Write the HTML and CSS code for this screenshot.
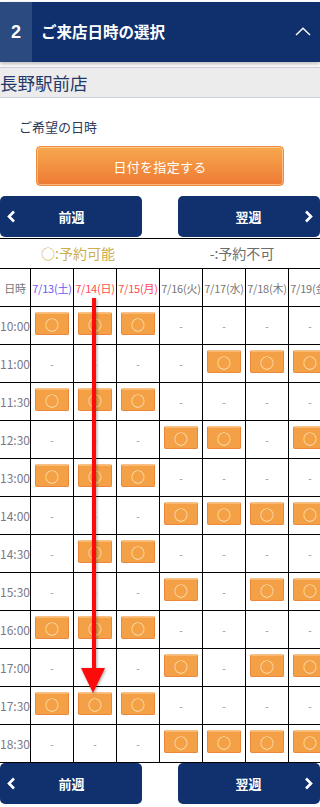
FILE: index.html
```html
<!DOCTYPE html>
<html lang="ja">
<head>
<meta charset="utf-8">
<title>ご来店日時の選択</title>
<link rel="stylesheet" href="styles.css">
</head>
<body>
<div class="page">
  <header class="step-head">
    <span class="step-num">2</span>
    <h2 class="step-title">ご来店日時の選択</h2>
    <svg class="step-toggle" viewBox="0 0 16 9"><polyline points="1,8 8,1.2 15,8" /></svg>
  </header>

  <div class="store">長野駅前店</div>

  <p class="label">ご希望の日時</p>
  <button class="date-btn">日付を指定する</button>

  <nav class="week-nav">
    <a class="week-btn prev" href="#"><svg class="chev" viewBox="0 0 9 13"><polyline points="7,1.5 2,6.5 7,11.5" /></svg><span>前週</span><i></i></a>
    <a class="week-btn next" href="#"><i></i><span>翌週</span><svg class="chev" viewBox="0 0 9 13"><polyline points="2,1.5 7,6.5 2,11.5" /></svg></a>
  </nav>

  <div class="legend">
    <span class="lg-ok">○:予約可能</span>
    <span class="lg-ng">-:予約不可</span>
  </div>

  <div class="cal-wrap">
    <div class="cal">
      <div class="hd">日時</div>
      <div class="hd sat">7/13(土)</div>
      <div class="hd sun">7/14(日)</div>
      <div class="hd sun">7/15(月)</div>
      <div class="hd">7/16(火)</div>
      <div class="hd">7/17(水)</div>
      <div class="hd">7/18(木)</div>
      <div class="hd">7/19(金)</div>

      <div class="tm">10:00</div>
      <div><span class="slot"><b>○</b></span></div><div><span class="slot"><b>○</b></span></div><div><span class="slot"><b>○</b></span></div>
      <div><span class="dash">-</span></div><div><span class="dash">-</span></div><div><span class="dash">-</span></div><div><span class="dash">-</span></div>

      <div class="tm">11:00</div>
      <div><span class="dash">-</span></div><div><span class="dash">-</span></div><div><span class="dash">-</span></div>
      <div><span class="dash">-</span></div><div><span class="slot"><b>○</b></span></div><div><span class="slot"><b>○</b></span></div><div><span class="slot"><b>○</b></span></div>

      <div class="tm">11:30</div>
      <div><span class="slot"><b>○</b></span></div><div><span class="slot"><b>○</b></span></div><div><span class="slot"><b>○</b></span></div>
      <div><span class="dash">-</span></div><div><span class="dash">-</span></div><div><span class="dash">-</span></div><div><span class="dash">-</span></div>

      <div class="tm">12:30</div>
      <div><span class="dash">-</span></div><div><span class="dash">-</span></div><div><span class="dash">-</span></div>
      <div><span class="slot"><b>○</b></span></div><div><span class="slot"><b>○</b></span></div><div><span class="dash">-</span></div><div><span class="slot"><b>○</b></span></div>

      <div class="tm">13:00</div>
      <div><span class="slot"><b>○</b></span></div><div><span class="slot"><b>○</b></span></div><div><span class="slot"><b>○</b></span></div>
      <div><span class="dash">-</span></div><div><span class="dash">-</span></div><div><span class="dash">-</span></div><div><span class="dash">-</span></div>

      <div class="tm">14:00</div>
      <div><span class="dash">-</span></div><div><span class="dash">-</span></div><div><span class="dash">-</span></div>
      <div><span class="slot"><b>○</b></span></div><div><span class="slot"><b>○</b></span></div><div><span class="slot"><b>○</b></span></div><div><span class="slot"><b>○</b></span></div>

      <div class="tm">14:30</div>
      <div><span class="dash">-</span></div><div><span class="slot"><b>○</b></span></div><div><span class="slot"><b>○</b></span></div>
      <div><span class="dash">-</span></div><div><span class="dash">-</span></div><div><span class="dash">-</span></div><div><span class="dash">-</span></div>

      <div class="tm">15:30</div>
      <div><span class="dash">-</span></div><div><span class="dash">-</span></div><div><span class="dash">-</span></div>
      <div><span class="slot"><b>○</b></span></div><div><span class="dash">-</span></div><div><span class="slot"><b>○</b></span></div><div><span class="slot"><b>○</b></span></div>

      <div class="tm">16:00</div>
      <div><span class="slot"><b>○</b></span></div><div><span class="slot"><b>○</b></span></div><div><span class="slot"><b>○</b></span></div>
      <div><span class="dash">-</span></div><div><span class="dash">-</span></div><div><span class="dash">-</span></div><div><span class="dash">-</span></div>

      <div class="tm">17:00</div>
      <div><span class="dash">-</span></div><div><span class="dash">-</span></div><div><span class="dash">-</span></div>
      <div><span class="slot"><b>○</b></span></div><div><span class="dash">-</span></div><div><span class="slot"><b>○</b></span></div><div><span class="slot"><b>○</b></span></div>

      <div class="tm">17:30</div>
      <div><span class="slot"><b>○</b></span></div><div><span class="slot"><b>○</b></span></div><div><span class="slot"><b>○</b></span></div>
      <div><span class="dash">-</span></div><div><span class="dash">-</span></div><div><span class="dash">-</span></div><div><span class="dash">-</span></div>

      <div class="tm">18:30</div>
      <div><span class="dash">-</span></div><div><span class="dash">-</span></div><div><span class="dash">-</span></div>
      <div><span class="slot"><b>○</b></span></div><div><span class="slot"><b>○</b></span></div><div><span class="slot"><b>○</b></span></div><div><span class="slot"><b>○</b></span></div>
    </div>
  </div>

  <nav class="week-nav bottom">
    <a class="week-btn prev" href="#"><svg class="chev" viewBox="0 0 9 13"><polyline points="7,1.5 2,6.5 7,11.5" /></svg><span>前週</span><i></i></a>
    <a class="week-btn next" href="#"><i></i><span>翌週</span><svg class="chev" viewBox="0 0 9 13"><polyline points="2,1.5 7,6.5 2,11.5" /></svg></a>
  </nav>

  <svg class="arrow" viewBox="0 0 36 404" width="36" height="404">
    <line x1="18" y1="4" x2="18" y2="378" />
    <polygon points="5,374 29,374 17,399" />
  </svg>
</div>
</body>
</html>
```

FILE: styles.css
```css
* { box-sizing: border-box; }

body {
  margin: 0;
  background: #fff;
  font-family: "Noto Sans CJK JP", "Noto Sans", sans-serif;
}

.page {
  position: relative;
  width: 320px;
  padding-top: 2px;
  overflow: hidden;
}

/* step header */
.step-head {
  display: flex;
  align-items: center;
  height: 60px;
  background: #0f306d;
  box-shadow: 0 2px 4px rgba(0, 0, 0, 0.28);
}
.step-num {
  width: 32px;
  height: 100%;
  display: flex;
  align-items: center;
  justify-content: center;
  background: #2a4a80;
  color: #fff;
  font-family: "Liberation Sans", "Noto Sans", sans-serif;
  font-weight: bold;
  font-size: 18px;
}
.step-title {
  flex: 1;
  margin: 0 0 0 9px;
  color: #fff;
  font-size: 15.5px;
  font-weight: bold;
  line-height: 1;
}
.step-toggle {
  width: 16px;
  height: 9px;
  margin: 0 9px 2px 0;
  fill: none;
  stroke: #fff;
  stroke-width: 1.4;
}

/* store bar */
.store {
  margin-top: 5px;
  height: 31px;
  display: flex;
  align-items: center;
  background: #ececec;
  border-top: 1px solid #c8cfd8;
  border-bottom: 1px solid #c8cfd8;
  color: #24396a;
  font-size: 17.5px;
  line-height: 1;
}

.label {
  margin: 19px 0 0 19px;
  font-size: 13px;
  line-height: 20px;
  color: #2b3a5c;
}

.date-btn {
  display: block;
  width: 248px;
  height: 40px;
  margin: 9px auto 0;
  padding: 0;
  border: 1px solid #ef8d3e;
  border-radius: 4px;
  background: linear-gradient(#f7a84e, #ee7a34);
  box-shadow: inset 0 0 0 1px rgba(255, 226, 190, 0.55);
  color: #fff;
  font-family: inherit;
  font-size: 13px;
  letter-spacing: 0.3px;
}

/* week nav */
.week-nav {
  display: flex;
  justify-content: space-between;
  margin-top: 10px;
}
.week-nav.bottom { margin-top: 0; }
.week-btn {
  width: 142px;
  height: 41px;
  display: grid;
  grid-template-columns: 1fr auto 1fr;
  align-items: center;
  padding: 0 6px 0 7px;
  background: #10316d;
  border-radius: 5px;
  color: #fff;
  font-size: 13px;
  font-weight: bold;
  text-decoration: none;
}
.week-btn.next { padding: 0 7px 0 6px; }
.week-btn .chev {
  width: 9px;
  height: 13px;
  fill: none;
  stroke: #fff;
  stroke-width: 2.6;
}
.week-btn.next .chev { justify-self: end; }

/* legend */
.legend {
  display: flex;
  margin-top: 1px;
  height: 30px;
  border-top: 1px solid #000;
  font-size: 14px;
  line-height: 29px;
}
.legend span {
  flex: 1;
  text-align: center;
}
.lg-ok { color: #cdad4d; }
.lg-ng { color: #6d6d6d; padding-left: 8px; }

/* calendar */
.cal-wrap {
  width: 320px;
  overflow: hidden;
}
.cal {
  display: grid;
  grid-template-columns: 31px repeat(7, 43px);
  grid-auto-rows: 38px;
  width: 332px;
  border-top: 1px solid #000;
}
.cal > div {
  display: flex;
  align-items: center;
  justify-content: center;
  border-right: 1px solid #000;
  border-bottom: 1px solid #000;
  white-space: nowrap;
}
.cal > .hd {
  font-size: 11px;
  color: #777;
  letter-spacing: -0.2px;
  overflow: visible;
}
.cal > .hd.sat { color: #6a58f2; }
.cal > .hd.sun { color: #ff4d4d; }
.cal > .tm {
  font-size: 12px;
  color: #7a7a86;
}

.slot {
  display: flex;
  align-items: center;
  justify-content: center;
  width: 34px;
  height: 23px;
  margin-bottom: 4px;
  border: 1px solid #ea873b;
  border-top-color: #f8c085;
  border-radius: 2px;
  background: #f4a046;
  box-shadow: inset 0 1px 0 rgba(255, 220, 170, 0.45);
}
.slot b {
  display: block;
  width: 14px;
  color: #fff4cf;
  font-family: "Noto Sans CJK JP", sans-serif;
  font-weight: normal;
  font-size: 14px;
  line-height: 14px;
  text-align: center;
}
.dash {
  color: #8b8b98;
  font-size: 10px;
}

/* annotation arrow */
.arrow {
  position: absolute;
  left: 76px;
  top: 294px;
  filter: drop-shadow(1px 1px 1.5px rgba(0, 0, 0, 0.35));
}
.arrow line {
  stroke: #ff0a0a;
  stroke-width: 4;
}
.arrow polygon { fill: #ff0a0a; }
```
